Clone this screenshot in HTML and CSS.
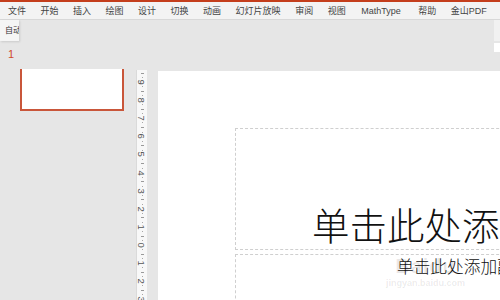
FILE: index.html
```html
<!DOCTYPE html>
<html lang="zh-CN">
<head>
    <meta charset="UTF-8">
    <title>PowerPoint</title>
    <link rel="stylesheet" href="styles.css">
</head>
<body>
    <div class="topline"></div>
    <div class="menubar">
        <span class="tab">文件</span>
        <span class="tab">开始</span>
        <span class="tab">插入</span>
        <span class="tab">绘图</span>
        <span class="tab">设计</span>
        <span class="tab">切换</span>
        <span class="tab">动画</span>
        <span class="tab">幻灯片放映</span>
        <span class="tab">审阅</span>
        <span class="tab">视图</span>
        <span class="tab tab-latin">MathType</span>
        <span class="tab">帮助</span>
        <span class="tab">金山PDF</span>
    </div>
    <div class="ribbon">
        <div class="auto-btn">自动</div>
        <div class="ribbon-stub"></div>
    </div>
    <div class="workarea">
        <div class="thumbs">
            <div class="slide-no">1</div>
            <div class="thumb"></div>
        </div>
        <div class="ruler-col">
            <div class="ruler">
                <i class="h"></i><i class="d"></i>
                <div class="cell"><i class="n">9</i><i class="d"></i><i class="h"></i><i class="d"></i></div>
                <div class="cell"><i class="n">8</i><i class="d"></i><i class="h"></i><i class="d"></i></div>
                <div class="cell"><i class="n">7</i><i class="d"></i><i class="h"></i><i class="d"></i></div>
                <div class="cell"><i class="n">6</i><i class="d"></i><i class="h"></i><i class="d"></i></div>
                <div class="cell"><i class="n">5</i><i class="d"></i><i class="h"></i><i class="d"></i></div>
                <div class="cell"><i class="n">4</i><i class="d"></i><i class="h"></i><i class="d"></i></div>
                <div class="cell"><i class="n">3</i><i class="d"></i><i class="h"></i><i class="d"></i></div>
                <div class="cell"><i class="n">2</i><i class="d"></i><i class="h"></i><i class="d"></i></div>
                <div class="cell"><i class="n">1</i><i class="d"></i><i class="h"></i><i class="d"></i></div>
                <div class="cell"><i class="n">0</i><i class="d"></i><i class="h"></i><i class="d"></i></div>
                <div class="cell"><i class="n">1</i><i class="d"></i><i class="h"></i><i class="d"></i></div>
                <div class="cell"><i class="n">2</i><i class="d"></i><i class="h"></i><i class="d"></i></div>
                <div class="cell"><i class="n">3</i><i class="d"></i><i class="h"></i><i class="d"></i></div>
            </div>
        </div>
        <div class="stage">
            <div class="hstub-row"><div class="hstub"></div></div>
            <div class="slide">
                <div class="ph ph-title"><span>单击此处添加标题</span></div>
                <div class="ph ph-sub"><span>单击此处添加副标题</span></div>
                <div class="watermark">
                    <div class="wm-logo">Bai<span>du</span></div>
                    <div class="wm-url">jingyan.baidu.com</div>
                </div>
            </div>
        </div>
    </div>
</body>
</html>
```

FILE: styles.css
```css
body{
    margin: 0;
    width: 500px;
    height: 300px;
    overflow: hidden;
    background-color: #e6e6e6;
    font-family: "Liberation Sans", "Noto Sans CJK SC", sans-serif;
    color: #444;
}
.topline{
    height: 2px;
    background-color: #c43e1c;
}
.menubar{
    display: flex;
    align-items: center;
    gap: 14.5px;
    height: 17px;
    padding-left: 8px;
    background-color: #f3f3f3;
    border-bottom: 1px solid #d8d8d8;
    font-size: 9px;
    white-space: nowrap;
}
.tab-latin{
    margin: 0 3px 0 1px;
}
.ribbon{
    display: flex;
    justify-content: space-between;
    height: 22px;
}
.auto-btn{
    width: 19px;
    height: 21px;
    overflow: hidden;
    padding-left: 5px;
    box-sizing: border-box;
    background-color: #f5f5f5;
    box-shadow: 1px 1px 2px rgba(0,0,0,0.12);
    font-size: 8px;
    line-height: 21px;
    color: #333;
    white-space: nowrap;
}
.ribbon-stub{
    width: 6px;
    height: 21px;
    background-color: #f1f1f1;
}
.workarea{
    display: flex;
    height: 258px;
}
.thumbs{
    width: 136px;
    flex-shrink: 0;
}
.slide-no{
    margin: 5px 0 0 8px;
    font-size: 11px;
    line-height: 14px;
    color: #d04a2a;
}
.thumb{
    margin: 8px 0 0 20px;
    width: 100px;
    height: 40px;
    background-color: white;
    border: 2px solid #c9563a;
    border-top: none;
}
.ruler-col{
    width: 22px;
    flex-shrink: 0;
    padding-top: 28px;
    box-sizing: border-box;
    overflow: hidden;
}
.ruler{
    display: flex;
    flex-direction: column;
    width: 10px;
    height: 240px;
    padding-top: 1px;
    background-color: #f8f8f8;
    border-left: 1px solid #dadada;
}
.cell{
    display: flex;
    flex-direction: column;
    height: 18.1px;
    flex-shrink: 0;
}
.ruler i{
    display: flex;
    align-items: center;
    justify-content: center;
    height: 4.525px;
    flex-shrink: 0;
    font-style: normal;
}
.ruler .d::after{
    content: "";
    width: 1px;
    height: 1px;
    background-color: #a8a8a8;
}
.ruler .h::after{
    content: "";
    width: 3px;
    height: 1px;
    background-color: #9a9a9a;
}
.ruler .n{
    font-size: 9.5px;
    color: #555;
    transform: rotate(90deg);
}
.stage{
    flex: 1;
    min-width: 0;
    display: flex;
    flex-direction: column;
}
.hstub-row{
    display: flex;
    justify-content: flex-end;
    margin-top: 1px;
}
.hstub{
    width: 6px;
    height: 9px;
    background-color: white;
}
.slide{
    position: relative;
    margin-top: 19px;
    flex: 1;
    overflow: hidden;
    background-color: white;
    padding: 57px 0 0 77px;
}
.ph{
    width: 460px;
    border: 1px dashed #cfcfcf;
    box-sizing: border-box;
    font-family: "Noto Sans CJK SC", sans-serif;
    color: #111;
    white-space: nowrap;
}
.ph-title{
    display: flex;
    align-items: flex-end;
    height: 122px;
    padding: 0 0 2px 76px;
    font-size: 37.5px;
    font-weight: 300;
    line-height: 46px;
}
.ph-sub{
    margin-top: 4px;
    height: 60px;
    padding: 0 0 0 161px;
    font-size: 16.7px;
    font-weight: 300;
    line-height: 22px;
}
.watermark{
    position: absolute;
    left: 228px;
    top: 184px;
    color: rgba(0,0,0,0.09);
    font-family: "Liberation Sans", sans-serif;
    font-weight: bold;
    text-align: center;
}
.wm-logo{
    font-size: 20px;
    line-height: 22px;
    letter-spacing: 1px;
}
.wm-url{
    font-size: 9px;
    line-height: 12px;
}
```
